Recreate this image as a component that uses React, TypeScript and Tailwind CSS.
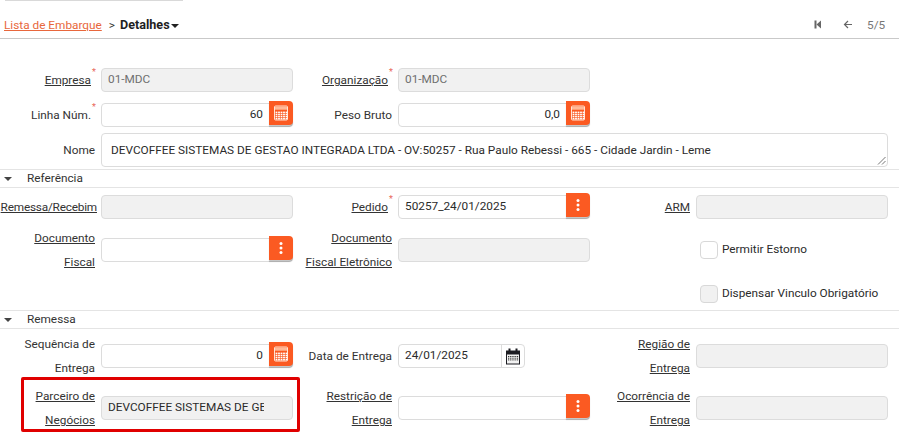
const FONT = "font-['Roboto','Open_Sans',sans-serif]";

function Calc() {
  const cells = [];
  for (let y = 0; y < 4; y++) for (let x = 0; x < 5; x++) cells.push(<rect key={x + "-" + y} x={2.6 + x * 2.5} y={6.6 + y * 2.1} width="1.8" height="1.5" fill="#fff" />);
  return (
    <svg width="16" height="16" viewBox="0 0 16 16" aria-hidden="true">
      <rect x="1.5" y="1" width="13" height="14" rx="1" fill="none" stroke="#ffe3d4" strokeWidth="1" />
      <rect x="2" y="1.5" width="12" height="3.2" fill="#ffb998" />
      {cells}
    </svg>
  );
}

function Dots() {
  return (
    <svg width="4" height="14" viewBox="0 0 4 14" aria-hidden="true" fill="#fff">
      <circle cx="2" cy="2.5" r="1.5" />
      <circle cx="2" cy="7" r="1.5" />
      <circle cx="2" cy="11.5" r="1.5" />
    </svg>
  );
}

function CalendarIcon() {
  const cells = [];
  for (let y = 0; y < 3; y++) for (let x = 0; x < 6; x++) cells.push(<rect key={x + "-" + y} x={3 + x * 1.8} y={8 + y * 1.7} width="1.1" height="1" fill="#333" />);
  return (
    <svg width="16" height="17" viewBox="0 0 16 17" aria-hidden="true">
      <rect x="1" y="2.5" width="14" height="14" fill="#1c1c22" />
      <rect x="3.5" y="0.5" width="2" height="4" fill="#1c1c22" />
      <rect x="10.5" y="0.5" width="2" height="4" fill="#1c1c22" />
      <rect x="2" y="6.5" width="12" height="9" fill="#f2f2f2" />
      {cells}
    </svg>
  );
}

function Label({ lines, link, req, tight, w = "w-[95px]" }: { lines: string[]; link?: boolean; req?: boolean; tight?: boolean; w?: string }) {
  return (
    <div className={`${w} shrink-0 text-right text-[11.8px] leading-[24px] text-[#333]`}>
      {lines.map((l, i) => (
        <div key={l} className={`relative flex justify-end whitespace-nowrap ${req ? "pr-[4px]" : ""} ${tight ? "mr-[-2px] tracking-[-0.2px]" : ""}`}>
          <span className={link ? "underline" : ""}>{l}</span>
          {req && i === 0 ? <span className="absolute right-[-1px] top-[-4px] text-[9px] leading-[16px] text-[#e8675a]">*</span> : null}
        </div>
      ))}
    </div>
  );
}

function Box({ value, disabled, right, action, width = "w-[192px]", clip }: { value?: string; disabled?: boolean; right?: boolean; action?: "calc" | "dots"; width?: string; clip?: boolean }) {
  return (
    <div className={`relative h-[24px] shrink-0 ${width}`}>
      <div
        className={`flex h-full items-center overflow-hidden rounded-[4px] border border-[#dcdcdc] text-[11.8px] ${disabled ? "bg-[#f1f1f1] text-[#6f6f6f]" : "bg-white text-[#2b2b2b]"} ${right ? "justify-end pr-[29px]" : "pl-[6px]"}`}
      >
        <span className={clip ? "w-[156px] overflow-hidden whitespace-nowrap text-[#2b2b2b]" : "whitespace-nowrap"}>{value}</span>
      </div>
      {action ? (
        <button className="absolute right-0 top-[-2px] flex h-[24px] w-[24px] items-center justify-center rounded-r-[4px] bg-[#fb5a22] shadow-[0_2px_1px_rgba(0,0,0,0.22)]">
          {action === "calc" ? <Calc /> : <Dots />}
        </button>
      ) : null}
    </div>
  );
}

function Cell({ w, labelW, lines, link, req, tight, children }: { w: string; labelW?: string; lines: string[]; link?: boolean; req?: boolean; tight?: boolean; children: React.ReactNode }) {
  return (
    <div className={`flex ${w} items-center gap-[6px]`}>
      <Label lines={lines} link={link} req={req} tight={tight} w={labelW} />
      {children}
    </div>
  );
}

function Section({ title }: { title: string }) {
  return (
    <div className="flex h-[19px] items-center gap-[15px] border-y border-y-[#e4e4e4] pl-[4px] text-[11.8px] text-[#333]">
      <span className="h-0 w-0 border-x-[4px] border-t-[4px] border-x-transparent border-t-[#444]" />
      <span className="pt-[1px]">{title}</span>
    </div>
  );
}

function Check({ label, disabled }: { label: string; disabled?: boolean }) {
  return (
    <div className="flex items-center gap-[4px] pl-[110px] text-[11.8px] text-[#2b2b2b]">
      <span className={`h-[18px] w-[18px] rounded-[4px] border border-[#d8d8d8] ${disabled ? "bg-[#f1f1f1]" : "bg-white"}`} />
      <span className="whitespace-nowrap">{label}</span>
    </div>
  );
}

export default function App() {
  const c1 = "w-[293px]";
  const c2 = "w-[297px]";
  const c3 = "w-[298px]";
  const l2 = "w-[99px]";
  const l3 = "w-[100px]";
  return (
    <div className={`relative h-[436px] w-[899px] overflow-hidden bg-white ${FONT}`}>
      <div className="ml-[5px] h-px w-[178px] bg-[#d9d9d9]" />
      <header className="flex h-[38px] items-center justify-between border-b border-b-[#c9c9c9] pl-[4px] pt-[12px] text-[11.8px]">
        <div className="flex items-center">
          <a className="text-[#e8673c] underline">Lista de Embarque</a>
          <span className="ml-[7px] text-[#333]">&gt;</span>
          <b className="ml-[5px] text-[12.6px] font-bold text-[#1f1f1f]">Detalhes</b>
          <span className="ml-[1px] mt-[1px] h-0 w-0 border-x-[4px] border-t-[4px] border-x-transparent border-t-[#222]" />
        </div>
        <div className="mr-[-6px] flex items-center text-[#777]">
          <svg className="mt-[-3px]" width="8" height="9" viewBox="0 0 8 9" fill="#666" aria-hidden="true"><rect x="0.5" y="0.5" width="2" height="8" /><path d="M7 0.5v8L2.5 4.5z" /></svg>
          <svg className="ml-[21px] mt-[-3px]" width="10" height="9" viewBox="0 0 10 9" fill="none" stroke="#666" strokeWidth="1.2" aria-hidden="true"><path d="M9 4.5H1.5M5 1 1.5 4.5 5 8" /></svg>
          <span className="ml-[14px] w-[18px] whitespace-nowrap">5/5</span>
          <span className="ml-[14px] mt-[-3px] h-px w-[6px] bg-[#666]" />
        </div>
      </header>

      <div className="flex pt-[29px]">
        <Cell w={c1} lines={["Empresa"]} link req><Box value="01-MDC" disabled /></Cell>
        <Cell w={c2} labelW={l2} lines={["Organização"]} link req><Box value="01-MDC" disabled /></Cell>
      </div>
      <div className="flex pt-[11px]">
        <Cell w={c1} lines={["Linha Núm."]} req><Box value="60" right action="calc" /></Cell>
        <Cell w={c2} labelW={l2} lines={["Peso Bruto"]}><Box value="0,0" right action="calc" /></Cell>
      </div>
      <div className="flex items-center gap-[6px] pt-[6px]">
        <Label lines={["Nome"]} />
        <div className="relative flex h-[34px] w-[787px] items-start rounded-[4px] border border-[#dcdcdc] pl-[9px] pt-[8px] text-[11.8px] leading-[16px] text-[#2b2b2b]">
          <span className="whitespace-nowrap">DEVCOFFEE SISTEMAS DE GESTAO INTEGRADA LTDA - OV:50257 - Rua Paulo Rebessi - 665 - Cidade Jardin - Leme</span>
          <svg className="absolute bottom-[1px] right-[1px]" width="9" height="9" viewBox="0 0 9 9" stroke="#666" strokeWidth="0.9" aria-hidden="true"><path d="M1 8.5 8.5 1M5 8.5 8.5 5" /></svg>
        </div>
      </div>

      <div className="pt-[2px]"><Section title="Referência" /></div>

      <div className="flex pt-[7px]">
        <Cell w={c1} lines={["Remessa/Recebim"]} link tight><Box disabled /></Cell>
        <Cell w={c2} labelW={l2} lines={["Pedido"]} link req><Box value="50257_24/01/2025" action="dots" /></Cell>
        <Cell w={c3} labelW={l3} lines={["ARM"]} link><Box disabled /></Cell>
      </div>
      <div className="flex pt-[7px]">
        <Cell w={c1} lines={["Documento", "Fiscal"]} link><Box action="dots" /></Cell>
        <Cell w={c2} labelW={l2} lines={["Documento", "Fiscal Eletrônico"]} link><Box disabled /></Cell>
        <div className="flex w-[298px] items-center"><Check label="Permitir Estorno" /></div>
      </div>
      <div className="flex h-[36px] items-end pb-[7px] pl-[590px]">
        <Check label="Dispensar Vinculo Obrigatório" disabled />
      </div>

      <Section title="Remessa" />

      <div className="flex pt-[3px]">
        <Cell w={c1} lines={["Sequência de", "Entrega"]}><Box value="0" right action="calc" /></Cell>
        <Cell w={c2} labelW={l2} lines={["Data de Entrega"]}>
          <div className="flex h-[24px] w-[127px] shrink-0 items-center rounded-[4px] border border-[#dcdcdc] text-[11.8px] text-[#2b2b2b]">
            <span className="flex-1 pl-[6px]">24/01/2025</span>
            <span className="flex h-full w-[23px] items-center justify-center border-l border-l-[#dcdcdc]"><CalendarIcon /></span>
          </div>
        </Cell>
        <Cell w={c3} labelW={l3} lines={["Região de", "Entrega"]} link><Box disabled /></Cell>
      </div>
      <div className="flex pt-[4px]">
        <Cell w={c1} lines={["Parceiro de", "Negócios"]} link><Box value="DEVCOFFEE SISTEMAS DE GESTAO INTEGRADA LTDA" disabled clip /></Cell>
        <Cell w={c2} labelW={l2} lines={["Restrição de", "Entrega"]} link><Box action="dots" /></Cell>
        <Cell w={c3} labelW={l3} lines={["Ocorrência de", "Entrega"]} link><Box disabled /></Cell>
      </div>

      <div className="pointer-events-none absolute left-[21px] top-[377px] h-[55px] w-[279px] rounded-[2px] border-[3px] border-[#e00000]" />
    </div>
  );
}
